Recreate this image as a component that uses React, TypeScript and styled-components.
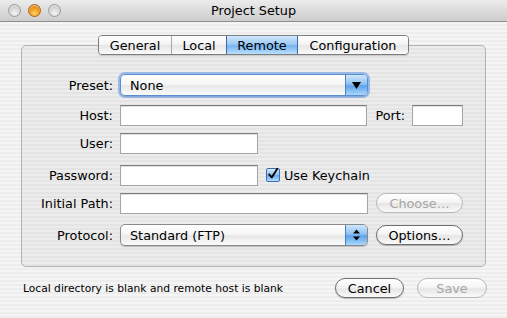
import React from 'react';
import styled, { createGlobalStyle, css } from 'styled-components';

const GlobalStyle = createGlobalStyle`
    html, body {
        margin: 0;
        padding: 0;
    }
    body {
        font-family: "DejaVu Sans", "Liberation Sans", sans-serif;
        font-size: 12.8px;
        color: #000;
    }
`;

const Window = styled.div`
    width: 507px;
    height: 318px;
    overflow: hidden;
    display: flex;
    flex-direction: column;
    background: repeating-linear-gradient(
        to bottom,
        #ededed 0px,
        #ededed 2px,
        #f5f5f5 2px,
        #f5f5f5 4px
    );
`;

const TitleBar = styled.div`
    height: 21px;
    flex-shrink: 0;
    display: flex;
    align-items: center;
    position: relative;
    background: linear-gradient(to bottom, #ececec 0%, #dcdcdc 50%, #cdcdcd 100%);
    border-bottom: 1px solid #8e8e8e;
`;

const Lights = styled.div`
    display: flex;
    gap: 7px;
    padding-left: 8px;
`;

const Light = styled.span<{ $orange?: boolean }>`
    width: 13px;
    height: 13px;
    border-radius: 50%;
    box-sizing: border-box;
    border: 1px solid ${p => (p.$orange ? '#a8621a' : '#9a9a9a')};
    background: ${p =>
        p.$orange
            ? 'radial-gradient(circle at 50% 75%, #ffd36a 0%, #f5a020 45%, #c86a10 100%)'
            : 'radial-gradient(circle at 50% 75%, #f4f4f4 0%, #d8d8d8 50%, #b8b8b8 100%)'};
    box-shadow: inset 0 1px 1px rgba(255, 255, 255, 0.6);
`;

const Title = styled.div`
    position: absolute;
    left: 0;
    right: 0;
    text-align: center;
    font-size: 12.8px;
    pointer-events: none;
`;

const Body = styled.div`
    padding: 13px 21px 0 21px;
    display: flex;
    flex-direction: column;
`;

const TabStrip = styled.div`
    align-self: center;
    display: flex;
    height: 20px;
    box-sizing: border-box;
    border: 1px solid #7d7d7d;
    border-radius: 4px;
    overflow: hidden;
    margin-bottom: -10px;
    position: relative;
    z-index: 1;
    box-shadow: 0 1px 1px rgba(0, 0, 0, 0.15);
`;

const Tab = styled.div<{ $active?: boolean; $w: number }>`
    width: ${p => p.$w}px;
    display: flex;
    align-items: center;
    justify-content: center;
    border-left: 1px solid #a8a8a8;
    &:first-child {
        border-left: none;
    }
    background: linear-gradient(to bottom, #ffffff 0%, #f4f4f4 45%, #e6e6e6 55%, #fafafa 100%);
    ${p =>
        p.$active &&
        css`
            background: linear-gradient(to bottom, #d2e8fc 0%, #9ccaf6 45%, #77b3f1 55%, #b9e0fd 100%);
            border-left-color: #3c6aa8;
            & + div {
                border-left-color: #3c6aa8;
            }
        `}
`;

const GroupBox = styled.div`
    height: 222px;
    box-sizing: border-box;
    border: 1px solid #b2b2b2;
    border-radius: 5px;
    background: rgba(0, 0, 0, 0.035);
    padding: 28px 22px 0 0;
    display: flex;
    flex-direction: column;
`;

const Row = styled.div<{ $gap: number }>`
    display: flex;
    align-items: center;
    margin-top: ${p => p.$gap}px;
    height: 22px;
`;

const Label = styled.label`
    width: 91px;
    text-align: right;
    margin-right: 7px;
    white-space: nowrap;
`;

const TextField = styled.div<{ $w: number }>`
    width: ${p => p.$w}px;
    height: 21px;
    box-sizing: border-box;
    background: #fff;
    border: 1px solid #a6a6a6;
    border-top-color: #7a7a7a;
    box-shadow: inset 0 1px 1px rgba(0, 0, 0, 0.12);
`;

const Popup = styled.div<{ $w: number; $focused?: boolean }>`
    width: ${p => p.$w}px;
    height: 22px;
    box-sizing: border-box;
    display: flex;
    border-radius: 5px;
    border: 1px solid ${p => (p.$focused ? '#5a8ed0' : '#8a8a8a')};
    overflow: hidden;
    background: linear-gradient(to bottom, #ffffff 0%, #f6f6f6 45%, #e8e8e8 55%, #fbfbfb 100%);
    box-shadow: ${p =>
        p.$focused ? '0 0 0 2px rgba(110, 160, 230, 0.65), 0 1px 1px rgba(0,0,0,0.2)' : '0 1px 1px rgba(0,0,0,0.2)'};
`;

const PopupText = styled.div`
    flex: 1;
    padding-left: 9px;
    display: flex;
    align-items: center;
`;

const PopupArrow = styled.div`
    width: 21px;
    display: flex;
    align-items: center;
    justify-content: center;
    border-left: 1px solid #4d7fc0;
    background: linear-gradient(to bottom, #cfe6fc 0%, #8fc2f4 45%, #5fa2ea 55%, #a8d8fc 100%);
`;

const SideLabel = styled.span`
    margin: 0 7px 0 8px;
`;

const PushButton = styled.div<{ $w: number; $disabled?: boolean }>`
    width: ${p => p.$w}px;
    height: 20px;
    box-sizing: border-box;
    border-radius: 10px;
    border: 1px solid ${p => (p.$disabled ? '#b8b8b8' : '#6e6e6e')};
    background: linear-gradient(to bottom, #ffffff 0%, #f5f5f5 45%, #e6e6e6 55%, #fafafa 100%);
    display: flex;
    align-items: center;
    justify-content: center;
    color: ${p => (p.$disabled ? '#a6a6a6' : '#000')};
    box-shadow: ${p => (p.$disabled ? 'none' : '0 1px 1px rgba(0,0,0,0.25)')};
`;

const CheckLabel = styled.label`
    display: flex;
    align-items: center;
    margin-left: 8px;
    gap: 4px;
`;

const CheckBox = styled.span`
    width: 14px;
    height: 14px;
    box-sizing: border-box;
    border: 1px solid #3d6db0;
    border-radius: 2px;
    background: linear-gradient(to bottom, #d6ebfd 0%, #93c4f4 45%, #68a6ec 55%, #b6e0fd 100%);
    display: flex;
    align-items: center;
    justify-content: center;
    overflow: visible;
`;

const Footer = styled.div`
    display: flex;
    align-items: center;
    padding: 11px 20px 0 23px;
    gap: 13px;
`;

const Status = styled.div`
    flex: 1;
    font-size: 10.7px;
`;

const FieldSpacer = styled.div`
    width: 8px;
`;

const App: React.FC = () => {
    return (
        <>
            <GlobalStyle />
            <Window>
                <TitleBar>
                    <Lights>
                        <Light />
                        <Light $orange />
                        <Light />
                    </Lights>
                    <Title>Project Setup</Title>
                </TitleBar>
                <Body>
                    <TabStrip>
                        <Tab $w={72}>General</Tab>
                        <Tab $w={54}>Local</Tab>
                        <Tab $w={70} $active>
                            Remote
                        </Tab>
                        <Tab $w={110}>Configuration</Tab>
                    </TabStrip>
                    <GroupBox>
                        <Row $gap={0}>
                            <Label>Preset:</Label>
                            <Popup $w={248} $focused>
                                <PopupText>None</PopupText>
                                <PopupArrow>
                                    <svg width="9" height="7" viewBox="0 0 9 7">
                                        <path d="M0 0 H9 L4.5 7 Z" fill="#000" />
                                    </svg>
                                </PopupArrow>
                            </Popup>
                        </Row>
                        <Row $gap={8}>
                            <Label>Host:</Label>
                            <TextField $w={248} />
                            <SideLabel>Port:</SideLabel>
                            <TextField $w={51} />
                        </Row>
                        <Row $gap={6}>
                            <Label>User:</Label>
                            <TextField $w={138} />
                        </Row>
                        <Row $gap={10}>
                            <Label>Password:</Label>
                            <TextField $w={138} />
                            <CheckLabel>
                                <CheckBox>
                                    <svg width="14" height="14" viewBox="0 0 14 14" style={{ marginTop: -3 }}>
                                        <path
                                            d="M2.5 7.5 L5.5 11 L12 1"
                                            stroke="#000"
                                            strokeWidth="2.2"
                                            fill="none"
                                            strokeLinecap="round"
                                            strokeLinejoin="round"
                                        />
                                    </svg>
                                </CheckBox>
                                Use Keychain
                            </CheckLabel>
                        </Row>
                        <Row $gap={6}>
                            <Label>Initial Path:</Label>
                            <TextField $w={248} />
                            <FieldSpacer />
                            <PushButton $w={87} $disabled>
                                Choose…
                            </PushButton>
                        </Row>
                        <Row $gap={10}>
                            <Label>Protocol:</Label>
                            <Popup $w={248}>
                                <PopupText>Standard (FTP)</PopupText>
                                <PopupArrow>
                                    <svg width="7" height="12" viewBox="0 0 7 12">
                                        <path d="M0 4.5 L3.5 0.5 L7 4.5 Z" fill="#000" />
                                        <path d="M0 7.5 L3.5 11.5 L7 7.5 Z" fill="#000" />
                                    </svg>
                                </PopupArrow>
                            </Popup>
                            <FieldSpacer />
                            <PushButton $w={87}>Options…</PushButton>
                        </Row>
                    </GroupBox>
                </Body>
                <Footer>
                    <Status>Local directory is blank and remote host is blank</Status>
                    <PushButton $w={69}>Cancel</PushButton>
                    <PushButton $w={70} $disabled>
                        Save
                    </PushButton>
                </Footer>
            </Window>
        </>
    );
};

export default App;
